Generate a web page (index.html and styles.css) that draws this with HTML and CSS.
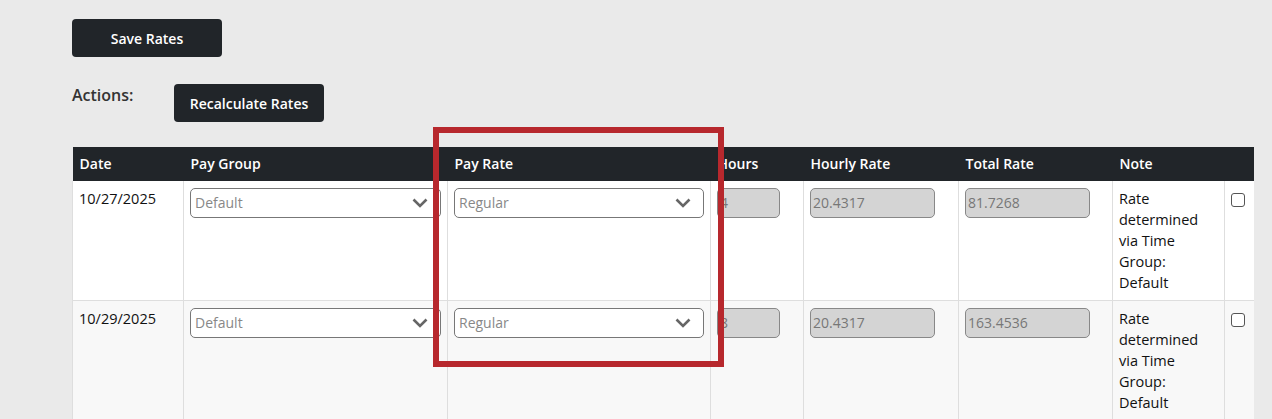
FILE: index.html
```html
<!DOCTYPE html>
<html lang="en">
<head>
    <meta charset="UTF-8">
    <meta name="viewport" content="width=device-width, initial-scale=1.0">
    <title>Rates</title>
    <link rel="stylesheet" href="styles.css">
</head>
<body>
    <div class="page">
        <button class="btn-dark">Save Rates</button>

        <div class="actions">
            <div class="actions-label">Actions:</div>
            <button class="btn-dark">Recalculate Rates</button>
        </div>

        <table class="rates-table">
            <colgroup>
                <col style="width:111px">
                <col style="width:264px">
                <col style="width:263px">
                <col style="width:93px">
                <col style="width:155px">
                <col style="width:154px">
                <col style="width:112px">
                <col style="width:29px">
            </colgroup>
            <thead>
                <tr>
                    <th>Date</th>
                    <th>Pay Group</th>
                    <th>Pay Rate</th>
                    <th>Hours</th>
                    <th>Hourly Rate</th>
                    <th>Total Rate</th>
                    <th>Note</th>
                    <th></th>
                </tr>
            </thead>
            <tbody>
                <tr>
                    <td>10/27/2025</td>
                    <td>
                        <div class="select">
                            <span>Default</span>
                            <svg class="chevron" width="16" height="10" viewBox="0 0 16 10"><path d="M1.5 1.5 L8 8 L14.5 1.5" fill="none" stroke="#666" stroke-width="2.6"/></svg>
                        </div>
                    </td>
                    <td>
                        <div class="select">
                            <span>Regular</span>
                            <svg class="chevron" width="16" height="10" viewBox="0 0 16 10"><path d="M1.5 1.5 L8 8 L14.5 1.5" fill="none" stroke="#666" stroke-width="2.6"/></svg>
                        </div>
                    </td>
                    <td><div class="field field-hours">4</div></td>
                    <td><div class="field">20.4317</div></td>
                    <td><div class="field">81.7268</div></td>
                    <td class="note">Rate determined via Time Group: Default</td>
                    <td><span class="check"></span></td>
                </tr>
                <tr class="striped">
                    <td>10/29/2025</td>
                    <td>
                        <div class="select">
                            <span>Default</span>
                            <svg class="chevron" width="16" height="10" viewBox="0 0 16 10"><path d="M1.5 1.5 L8 8 L14.5 1.5" fill="none" stroke="#666" stroke-width="2.6"/></svg>
                        </div>
                    </td>
                    <td>
                        <div class="select">
                            <span>Regular</span>
                            <svg class="chevron" width="16" height="10" viewBox="0 0 16 10"><path d="M1.5 1.5 L8 8 L14.5 1.5" fill="none" stroke="#666" stroke-width="2.6"/></svg>
                        </div>
                    </td>
                    <td><div class="field field-hours">8</div></td>
                    <td><div class="field">20.4317</div></td>
                    <td><div class="field">163.4536</div></td>
                    <td class="note">Rate determined via Time Group: Default</td>
                    <td><span class="check"></span></td>
                </tr>
            </tbody>
        </table>

        <div class="highlight"></div>
    </div>
</body>
</html>
```

FILE: styles.css
```css
body {
    margin: 0;
    padding: 0;
    background-color: #eaeaea;
    font-family: "Open Sans", Arial, sans-serif;
    color: #111;
}
.page {
    position: relative;
    width: 1181px;
    padding: 19px 0 0 72px;
}
.btn-dark {
    display: block;
    width: 150px;
    height: 38px;
    background-color: #212529;
    color: #fff;
    border: none;
    border-radius: 4px;
    font-family: inherit;
    font-size: 14px;
    font-weight: 600;
    padding: 0;
    cursor: pointer;
}
.actions {
    display: flex;
    align-items: flex-start;
    margin-top: 27px;
}
.actions-label {
    width: 102px;
    font-size: 16px;
    font-weight: 600;
    line-height: 22px;
    color: #333;
}
.rates-table {
    margin-top: 25px;
    width: 1181px;
    table-layout: fixed;
    border-collapse: collapse;
    font-size: 14.5px;
}
.rates-table th {
    background-color: #212529;
    color: #fff;
    font-size: 14px;
    font-weight: 600;
    text-align: left;
    padding: 7px 6px 7px 7px;
    line-height: 20px;
    white-space: nowrap;
}
.rates-table td {
    background-color: #fff;
    vertical-align: top;
    padding: 7px 6px 7px 6px;
    line-height: 21px;
    border-left: 1px solid #dedede;
    border-bottom: 1px solid #dedede;
}
.rates-table tr.striped td {
    background-color: #f8f8f8;
}
.select {
    display: flex;
    align-items: center;
    justify-content: space-between;
    height: 30px;
    box-sizing: border-box;
    background-color: #fff;
    border: 1px solid #777;
    border-radius: 5px;
    padding: 0 12px 0 4px;
    color: #888;
    font-size: 14px;
    line-height: 28px;
}
.chevron {
    display: block;
}
.field {
    width: 125px;
    height: 30px;
    box-sizing: border-box;
    background-color: #d4d4d4;
    border: 1px solid #888;
    border-radius: 5px;
    padding: 0 2px;
    color: #777;
    font-size: 14px;
    line-height: 28px;
}
.field-hours {
    width: 63px;
}
.note {
    color: #111;
}
.check {
    display: block;
    width: 14px;
    height: 14px;
    box-sizing: border-box;
    margin-top: 5px;
    border: 1px solid #555;
    border-radius: 3px;
    background-color: #fff;
}
.highlight {
    position: absolute;
    left: 433px;
    top: 127px;
    width: 291px;
    height: 240px;
    box-sizing: border-box;
    border: 6px solid #b7282d;
}
```
